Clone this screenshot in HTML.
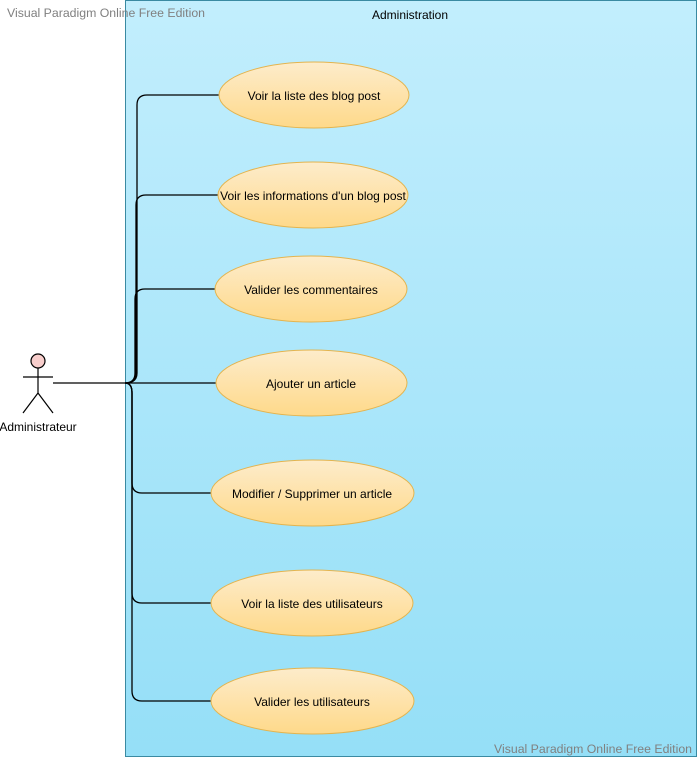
<!DOCTYPE html>
<html><head><style>html,body{margin:0;padding:0;background:#fff;width:698px;height:758px;overflow:hidden}</style></head>
<body>
<svg width="698" height="758" xmlns="http://www.w3.org/2000/svg" font-family="Liberation Sans, sans-serif">
<defs>
<linearGradient id="bg" x1="0" y1="0" x2="0" y2="1"><stop offset="0" stop-color="#c2eefd"/><stop offset="1" stop-color="#95dff7"/></linearGradient>
<linearGradient id="el" x1="0" y1="0" x2="0" y2="1"><stop offset="0" stop-color="#fdeccb"/><stop offset="1" stop-color="#fed98a"/></linearGradient>
</defs>
<rect x="125.5" y="0.5" width="571" height="756" fill="url(#bg)" stroke="#3a8aa2"/>
<text x="410" y="19" font-size="12" text-anchor="middle" fill="#000">Administration</text>
<text x="7" y="17" font-size="12.3" fill="#808080">Visual Paradigm Online Free Edition</text>
<text x="692" y="753" font-size="12.3" fill="#808080" text-anchor="end">Visual Paradigm Online Free Edition</text>
<g fill="none" stroke="#000" stroke-width="1.3">
<path d="M53 383 H216"/>
<path d="M125 383 Q137 383 137 373 V105 Q137 95 147 95 H219"/>
<path d="M125 383 Q136 383 136 373 V205 Q136 195 146 195 H218"/>
<path d="M125 383 Q135 383 135 373 V299 Q135 289 145 289 H215"/>
<path d="M125 383 Q132 383 132 393 V483 Q132 493 142 493 H211"/>
<path d="M125 383 Q132 383 132 393 V593 Q132 603 142 603 H211"/>
<path d="M125 383 Q132 383 132 393 V691 Q132 701 142 701 H211"/>
</g>
<g stroke="#000" stroke-width="1.2" fill="none">
<circle cx="38" cy="361" r="7" fill="#f8cecc"/>
<path d="M38 368 V393 M23 377 H53 M38 393 L23 413 M38 393 L53 413"/>
</g>
<text x="38" y="431" font-size="12" text-anchor="middle">Administrateur</text>
<g stroke="#e3b44f" stroke-width="1" fill="url(#el)">
<ellipse cx="314" cy="95" rx="95" ry="33"/>
<ellipse cx="313" cy="195" rx="95" ry="33"/>
<ellipse cx="311" cy="289" rx="96" ry="33"/>
<ellipse cx="311.5" cy="383" rx="95.5" ry="33"/>
<ellipse cx="312.5" cy="493" rx="101.5" ry="33"/>
<ellipse cx="312" cy="603" rx="101" ry="33"/>
<ellipse cx="312.5" cy="701" rx="101.5" ry="33"/>
</g>
<g font-size="12" text-anchor="middle" fill="#000">
<text x="314" y="100">Voir la liste des blog post</text>
<text x="313" y="200">Voir les informations d'un blog post</text>
<text x="311" y="294">Valider les commentaires</text>
<text x="311" y="388">Ajouter un article</text>
<text x="312" y="498">Modifier / Supprimer un article</text>
<text x="312" y="608">Voir la liste des utilisateurs</text>
<text x="312" y="706">Valider les utilisateurs</text>
</g>
</svg>
</body></html>
